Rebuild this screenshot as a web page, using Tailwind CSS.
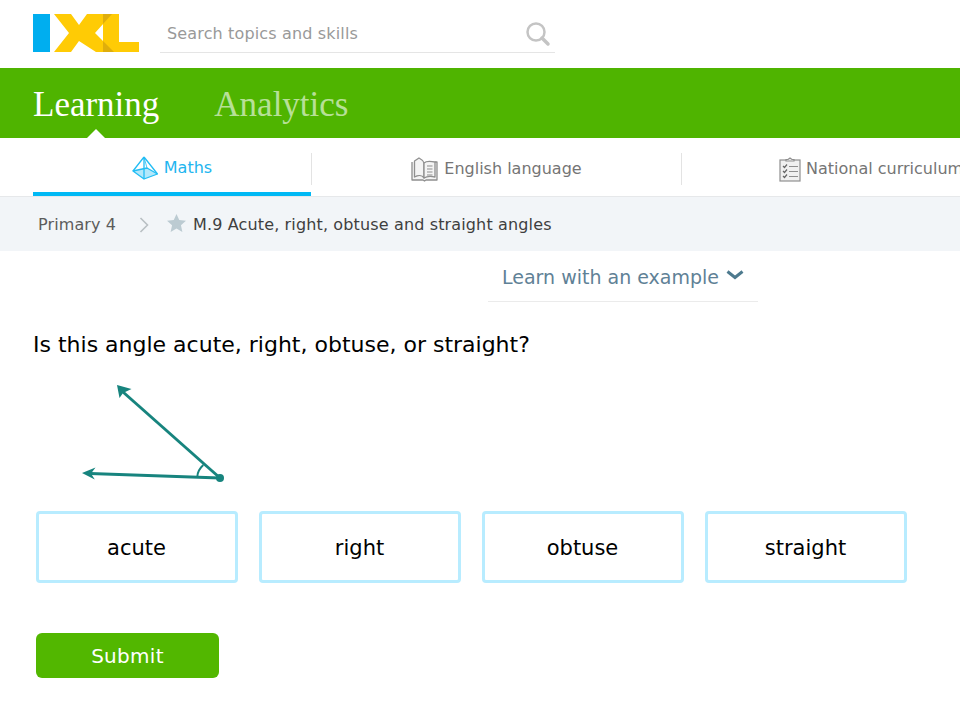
<!DOCTYPE html>
<html lang="en">
  <head>
    <meta charset="UTF-8" />
    <meta name="viewport" content="width=device-width, initial-scale=1.0" />
    <script src="https://cdn.jsdelivr.net/npm/@tailwindcss/browser@4"></script>
    <title>IXL - Acute, right, obtuse and straight angles</title>
  </head>
  <body class="bg-white font-['DejaVu_Sans',sans-serif] overflow-hidden">
    <div class="w-[960px] h-[719px] overflow-hidden">
      <!-- top bar -->
      <header class="h-[68px] flex items-center pl-[33px] bg-white">
        <svg width="106" height="38" viewBox="0 0 106 38" class="shrink-0 mb-[2px]">
          <rect x="0" y="0" width="17" height="38" fill="#00aeef" />
          <polygon points="21,0 38,0 46,11 54,0 79,0 62,19 81,38 63,38 46,27 38,38 21,38 36,19" fill="#ffcb05" />
          <polygon points="70,0 86,0 86,28 106,28 106,38 70,38" fill="#ffcb05" />
          <polygon points="70,0 79,0 70,10" fill="#dfae0c" />
          <polygon points="70,27 81,38 70,38" fill="#dfae0c" />
        </svg>
        <div class="ml-[21px] w-[395px] h-[37px] border-b border-[#e5e5e5] flex items-center justify-between pl-[7px] pr-[4px]">
          <span class="text-[16px] tracking-[0.15px] text-[#999999]">Search topics and skills</span>
          <svg width="26" height="26" viewBox="0 0 26 26" fill="none" stroke="#c4c4c4">
            <circle cx="11" cy="11" r="8.500" stroke-width="2.500" />
            <path d="M17 17l6 6" stroke-width="3.500" stroke-linecap="round" />
          </svg>
        </div>
      </header>

      <!-- green nav -->
      <nav class="relative h-[70px] pt-[5px] bg-[#4fb400] flex items-center pl-[33px] gap-[55px] font-['Liberation_Serif',serif]">
        <span class="text-[35px] text-white">Learning</span>
        <span class="text-[35px] text-white/60">Analytics</span>
        <div class="absolute left-[87px] bottom-0 w-0 h-0 border-x-[9px] border-x-transparent border-b-[9px] border-b-white"></div>
      </nav>

      <!-- subject tabs -->
      <div class="h-[59px] flex pl-[33px] bg-white border-b border-[#e6e8ea]">
        <div class="w-[278px] h-[58px] shrink-0 flex items-center justify-center gap-[6px] pt-[6px] border-b-[4px] border-[#00b9f5]">
          <svg width="26" height="24" viewBox="0 0 26 24" fill="none" stroke="#22bdf4" stroke-width="1.300" stroke-linejoin="round">
            <polygon points="1,15 15,12 25.500,18 12,23" fill="#b3e8fb" />
            <path d="M12 1L1 15M12 1L25.500 18M12 1L12 23" />
            <path d="M12 1L15 12" stroke-width="0.800" />
          </svg>
          <span class="text-[16px] text-[#22b5ef]">Maths</span>
        </div>
        <div class="w-[370px] h-[32px] mt-[15px] shrink-0 flex items-center justify-center gap-[6px] border-l border-[#e3e3e3]">
          <svg width="27" height="25" viewBox="0 0 27 25" fill="#f4f4f4" stroke="#8f8f8f" stroke-width="1.300" stroke-linejoin="round">
            <path d="M1 5V23H12L13.500 24L15 23H26V5H24" />
            <path d="M13 21C11 18 7 18 3.500 20V4L8 1C10 2 12 3 13 6Z" />
            <path d="M13 6C15 4 19 4 24 5V20C20 19 16 19 13 21Z" />
            <path d="M16 9H21.500M16 12H21.500M16 15H21.500M16 18H21.500" stroke-width="1" />
          </svg>
          <span class="text-[16px] text-[#757575]">English language</span>
        </div>
        <div class="w-[370px] h-[32px] mt-[15px] shrink-0 flex items-center pl-[97px] gap-[5px] border-l border-[#e3e3e3]">
          <svg width="22" height="25" viewBox="0 0 22 25" fill="#f0f0f0" stroke="#8f8f8f" stroke-width="1.200" class="shrink-0">
            <rect x="1" y="3" width="20" height="21" />
            <path d="M7 4V2.500H9L11 1L13 2.500H15V4Z" />
            <path d="M4 9l1.500 1.500L8 7.500M4 14l1.500 1.500L8 12.500M4 19l1.500 1.500L8 17.500" fill="none" stroke="#666" />
            <path d="M10 9.500H19M10 14.500H19M10 19.500H19" fill="none" />
          </svg>
          <span class="text-[16px] text-[#757575] whitespace-nowrap">National curriculum</span>
        </div>
      </div>

      <!-- breadcrumb -->
      <div class="h-[54px] pt-[2px] bg-[#f2f5f8] flex items-center pl-[38px]">
        <span class="text-[16px] tracking-[0.1px] text-[#5c5c5c]">Primary 4</span>
        <svg width="10" height="16" viewBox="0 0 10 16" fill="none" stroke="#b9bfc3" stroke-width="1.600" class="ml-[23px]">
          <path d="M1.500 1L8.500 8L1.500 15" />
        </svg>
        <svg width="19" height="18" viewBox="0 0 20 19" fill="#bccbd2" class="ml-[18px] mb-[4px]">
          <polygon points="10,0 12.900,6.300 20,7.200 14.700,11.900 16.200,19 10,15.400 3.800,19 5.300,11.900 0,7.200 7.100,6.300" />
        </svg>
        <span class="ml-[7px] text-[16px] tracking-[0.14px] text-[#3f3f3f]">M.9 Acute, right, obtuse and straight angles</span>
      </div>

      <!-- learn with an example -->
      <div class="ml-[488px] w-[270px] h-[51px] pt-[2px] border-b border-[#ebebeb] flex items-center justify-center gap-[7px]">
        <span class="text-[19px] text-[#5f8196]">Learn with an example</span>
        <svg width="18" height="10" viewBox="0 0 18 10" fill="none" stroke="#4d7a8e" stroke-width="3" class="mb-[5px]">
          <path d="M1.500 1.500L9 7.500L16.500 1.500" />
        </svg>
      </div>

      <!-- question -->
      <main class="pl-[33px]">
        <p class="mt-[29px] text-[22px] leading-[28px] text-black">Is this angle acute, right, obtuse, or straight?</p>
        <svg width="160" height="115" viewBox="0 0 160 115" fill="none" stroke="#17847e" class="mt-[13px] ml-[42px] block">
          <path d="M145 106L48 20" stroke-width="3" />
          <path d="M145 106L15 101.500" stroke-width="3" />
          <path d="M128.300 93C125 96 122.500 100 122.300 104.700" stroke-width="2" />
          <polygon points="42,13 56.500,17 48,21 44.500,26" fill="#17847e" stroke="none" />
          <polygon points="7,101 20.500,95.500 16,101.500 19.800,107.500" fill="#17847e" stroke="none" />
          <circle cx="145" cy="106" r="4" fill="#17847e" stroke="none" />
        </svg>
        <div class="mt-[24px] ml-[2.5px] flex gap-[21px]">
          <button class="w-[202px] h-[72px] pt-[3px] rounded-[4px] border-[3px] border-[#b8ecff] bg-white text-[21px] text-black">acute</button>
          <button class="w-[202px] h-[72px] pt-[3px] rounded-[4px] border-[3px] border-[#b8ecff] bg-white text-[21px] text-black">right</button>
          <button class="w-[202px] h-[72px] pt-[3px] rounded-[4px] border-[3px] border-[#b8ecff] bg-white text-[21px] text-black">obtuse</button>
          <button class="w-[202px] h-[72px] pt-[3px] rounded-[4px] border-[3px] border-[#b8ecff] bg-white text-[21px] text-black">straight</button>
        </div>
        <button class="mt-[50px] ml-[3px] w-[183px] h-[45px] rounded-[6px] bg-[#52b700] text-[20px] tracking-[0.3px] text-white">Submit</button>
      </main>
    </div>
  </body>
</html>
